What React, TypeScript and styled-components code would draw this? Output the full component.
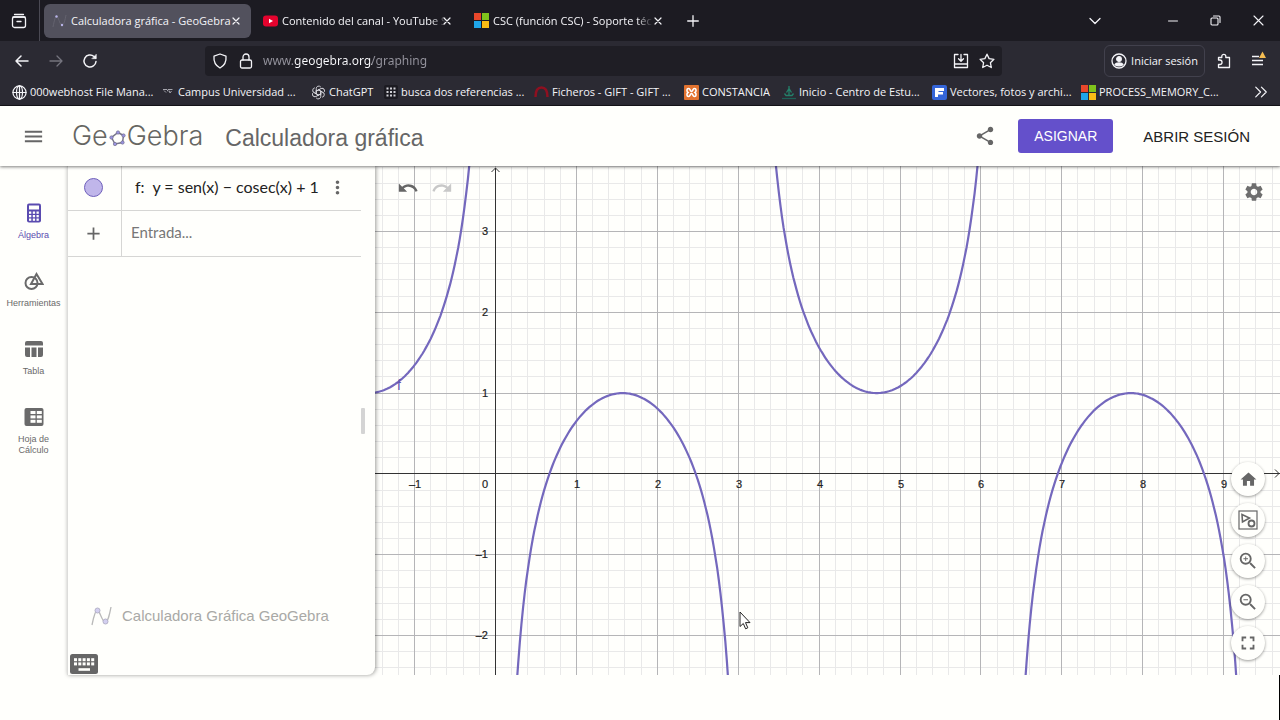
import React, { useLayoutEffect, useRef, useState } from "react";
import styled, { createGlobalStyle, css } from "styled-components";
import {
  MdAdd,
  MdHome,
  MdMenu,
  MdMoreVert,
  MdRedo,
  MdSettings,
  MdShare,
  MdUndo,
  MdZoomIn,
  MdZoomOut,
  MdFullscreen,
} from "react-icons/md";

const chromeFont = `"Open Sans", "Noto Sans", sans-serif`;
const appFont = `"Liberation Sans", Arial, sans-serif`;
const mathFont = `Lato, "Open Sans", sans-serif`;
const paper = "#fffffc";

const GlobalStyle = createGlobalStyle`
  *, *::before, *::after { box-sizing: border-box; }
  body { margin: 0; background: ${paper}; font-family: ${appFont}; }
  button, input { font: inherit; margin: 0; padding: 0; border: 0; background: none; color: inherit; }
  button { cursor: pointer; }
  svg { display: block; flex: none; }
`;

const Page = styled.div`
  display: flex;
  flex-direction: column;
  min-height: 100vh;
`;

/* ---------- browser window ---------- */

const Browser = styled.header`
  background: #2b2a33;
  color: #f4f4f8;
  font-family: ${chromeFont};
  font-size: 11px;
  line-height: 16px;
  border-bottom: 1px solid #15141a;
`;

const TabStrip = styled.div`
  display: flex;
  align-items: center;
  height: 41px;
  background: #1c1b22;
`;

const RecentButton = styled.button`
  display: grid;
  place-items: center;
  width: 40px;
  height: 41px;
  padding-right: 2px;
  border-right: 1px solid #4a4953;
`;

const TabList = styled.div`
  display: flex;
  gap: 4px;
  padding-left: 4px;
`;

const Tab = styled.div<{ $active?: boolean }>`
  display: flex;
  align-items: center;
  width: 207px;
  height: 34px;
  padding: 0 10px 0 8px;
  border-radius: 6px;
  ${(p) =>
    p.$active &&
    css`
      background: #52515d;
    `}
`;

const TabTitle = styled.button`
  display: flex;
  flex: 1;
  align-items: center;
  gap: 4px;
  min-width: 0;
  text-align: left;
`;

const TabText = styled.span<{ $fade?: boolean }>`
  flex: 1;
  white-space: nowrap;
  ${(p) =>
    p.$fade &&
    css`
      mask-image: linear-gradient(to left, transparent 0, #000 16px);
    `}
`;

const IconButton = styled.button<{ $w?: number; $h?: number }>`
  display: grid;
  place-items: center;
  flex: none;
  width: ${(p) => p.$w ?? 34}px;
  height: ${(p) => p.$h ?? 34}px;

  &:disabled {
    color: #75747e;
  }
`;

const Spacer = styled.div<{ $w?: number }>`
  flex: ${(p) => (p.$w ? `0 0 ${p.$w}px` : "1")};
`;

const NavBar = styled.div`
  display: flex;
  align-items: center;
  height: 39px;
  padding: 0 5px;
`;

const NavButtons = styled.div`
  display: flex;
  flex: 0 1 200px;
`;

const UrlBar = styled.label`
  display: flex;
  flex: 1;
  align-items: center;
  height: 30px;
  padding: 0 2px;
  border-radius: 4px;
  background: #1f1e25;
`;

const UrlInput = styled.input`
  flex: 1;
  min-width: 0;
  padding-left: 4px;
  font-family: "Noto Sans", sans-serif;
  font-size: 12px;
  outline: none;
  color: transparent;
  background: linear-gradient(to right, #96959f 34px, #fbfbfe 34px 113px, #96959f 113px);
  background-clip: text;
  -webkit-background-clip: text;
`;

const SignIn = styled.button`
  display: flex;
  align-items: center;
  gap: 4px;
  height: 32px;
  padding: 0 6px;
  border: 1px solid #42414d;
  border-radius: 6px;
  white-space: nowrap;
`;

const Bookmarks = styled.nav`
  display: flex;
  align-items: center;
  height: 25px;
  padding: 0 0 1px 12px;
`;

const Bookmark = styled.a<{ $w: number }>`
  display: flex;
  flex: 0 1 ${(p) => p.$w}px;
  align-items: center;
  gap: 3px;
  color: inherit;
  text-decoration: none;
  white-space: nowrap;
`;

/* ---------- GeoGebra page ---------- */

const AppBar = styled.header`
  position: relative;
  z-index: 2;
  display: flex;
  align-items: center;
  height: 60px;
  padding: 0 30px 0 21px;
  background: ${paper};
  color: #666;
  box-shadow: 0 1px 3px rgba(0, 0, 0, 0.5);
`;

const Brand = styled.a`
  display: flex;
  align-items: center;
  margin-left: 27px;
  color: #666662;
  font-family: Inter, ${appFont};
  font-weight: 300;
  font-size: 27px;
  line-height: 32px;
  text-decoration: none;

  svg {
    margin-top: 4px;
  }
`;

const AppTitle = styled.h1`
  margin: 3px 0 0 22px;
  font-size: 23px;
  font-weight: 400;
  line-height: 32px;
  white-space: nowrap;
`;

const AssignButton = styled.button`
  height: 34px;
  margin: 0 30px 0 16px;
  padding: 0 16px;
  border-radius: 3px;
  background: #6450cb;
  color: #fff;
  font-size: 14px;
`;

const LoginButton = styled.button`
  color: #222;
  font-size: 15px;
  white-space: nowrap;
`;

const Workspace = styled.main`
  display: flex;
  flex: 1;
  min-height: 480px;
`;

const SideNav = styled.nav`
  display: flex;
  flex: none;
  flex-direction: column;
  gap: 30px;
  width: 67px;
  padding-top: 37px;
`;

const SideItem = styled.button<{ $active?: boolean }>`
  display: flex;
  flex-direction: column;
  align-items: center;
  gap: 7px;
  color: ${(p) => (p.$active ? "#5a4bb0" : "#6a6a6a")};
  font-size: 9px;
  line-height: 11px;
`;

const AlgebraPanel = styled.section`
  position: relative;
  z-index: 1;
  display: flex;
  flex: none;
  width: 308px;
  border-left: 1px solid #dcdcda;
  border-bottom-right-radius: 8px;
  background: ${paper};
  box-shadow: 1px 0 4px rgba(0, 0, 0, 0.4);
`;

const AlgebraContent = styled.div`
  display: flex;
  flex: 1;
  flex-direction: column;
`;

const AlgebraRow = styled.div`
  display: flex;
  align-items: stretch;
  height: 46px;
  border-bottom: 1px solid #d6d6d4;

  &:first-child {
    height: 45px;
  }
`;

const RowHead = styled.div`
  display: grid;
  place-items: center;
  width: 54px;
  padding: 0 3px 1px 0;
  border-right: 1px solid #d6d6d4;
  color: #666;
`;

const ColorDot = styled.button`
  width: 19px;
  height: 19px;
  border: 1px solid #6f60bb;
  border-radius: 50%;
  background: #c0b6ea;
`;

const Formula = styled.div`
  display: flex;
  flex: 1;
  align-items: center;
  padding: 0 0 3px 13px;
  color: #222;
  font-family: ${mathFont};
  font-size: 16px;
  white-space: nowrap;
`;

const FormulaInput = styled.input`
  flex: 1;
  min-width: 0;
  padding: 0 0 3px 9px;
  outline: none;
  font-family: ${mathFont};
  font-size: 15px;

  &::placeholder {
    color: #777;
    opacity: 1;
  }
`;

const PanelFooter = styled.div`
  display: flex;
  flex-direction: column;
  gap: 27px;
  margin-top: auto;
  padding: 0 0 1px 2px;
`;

const Watermark = styled.div`
  display: flex;
  align-items: center;
  gap: 10px;
  padding-left: 21px;
  color: #a9a9a6;
  font-size: 15px;
  line-height: 20px;
  white-space: nowrap;
`;

const Splitter = styled.div`
  display: flex;
  align-items: center;
  width: 14px;

  &::after {
    content: "";
    width: 4px;
    height: 26px;
    border-radius: 1px;
    background: #d4d4d4;
  }
`;

const GraphPane = styled.section`
  position: relative;
  flex: 1;
  min-width: 0;
  overflow: hidden;
`;

const Plot = styled.svg`
  position: absolute;
  inset: 0;
  width: 100%;
  height: 100%;
  font-family: ${appFont};
  font-size: 11px;
`;

const History = styled.div`
  position: absolute;
  top: 11px;
  left: 22px;
  display: flex;
  gap: 12px;
  color: #666;
`;

const HistoryButton = styled.button`
  &:disabled {
    color: #c8c8c8;
  }
`;

const SettingsButton = styled.button`
  position: absolute;
  top: 15px;
  right: 15px;
  color: #6e6e6e;
`;

const ZoomTools = styled.div`
  position: absolute;
  right: 15px;
  bottom: 15px;
  display: flex;
  flex-direction: column;
  gap: 7px;
`;

const RoundButton = styled.button`
  display: grid;
  place-items: center;
  width: 34px;
  height: 34px;
  border-radius: 50%;
  background: ${paper};
  color: #666;
  box-shadow: 0 1px 3px rgba(0, 0, 0, 0.4);
`;

const Pointer = styled.svg`
  position: absolute;
  top: 445px;
  left: 364px;
  pointer-events: none;
`;

const BottomStrip = styled.footer`
  height: 45px;
  border-right: 1px solid #000;
  background: ${paper};
`;

/* ---------- icons ---------- */

type LineProps = { size?: number; box?: number; w?: number; children: React.ReactNode };
const Line = ({ size = 16, box = 16, w = 1.3, children }: LineProps) => (
  <svg
    width={size}
    height={size}
    viewBox={`0 0 ${box} ${box}`}
    fill="none"
    stroke="currentColor"
    strokeWidth={w}
    strokeLinecap="round"
    strokeLinejoin="round"
    aria-hidden="true"
  >
    {children}
  </svg>
);

const CloseIcon = () => (
  <Line size={8} box={8} w={1.2}>
    <path d="M1 1l6 6M7 1L1 7" />
  </Line>
);

const Microsoft = () => (
  <svg width="15" height="15" viewBox="0 0 15 15" aria-hidden="true">
    <path fill="#e8472b" d="M0 0h7v7H0z" />
    <path fill="#7fc31c" d="M8 0h7v7H8z" />
    <path fill="#1fa5e8" d="M0 8h7v7H0z" />
    <path fill="#f9bc15" d="M8 8h7v7H8z" />
  </svg>
);

const YouTube = () => (
  <svg width="15" height="14" viewBox="0 0 15 14" aria-hidden="true">
    <rect y="1.5" width="15" height="11" rx="3" fill="#e4032e" />
    <path d="M6 4.7v4.6L10 7z" fill="#fff" />
  </svg>
);

const GraphFavicon = () => (
  <svg width="15" height="16" viewBox="0 0 15 16" aria-hidden="true">
    <path d="M1 14C3 4 4 2 5.500 4S8 12 10 12s3-5 4-10" fill="none" stroke="#64636f" />
    <circle cx="4.500" cy="3.500" r="1.200" fill="#b9b4e8" />
    <circle cx="10" cy="12" r="1.200" fill="#b9b4e8" />
  </svg>
);

const Globe = () => (
  <Line size={15} w={1.3}>
    <circle cx="8" cy="8" r="7" />
    <ellipse cx="8" cy="8" rx="3.200" ry="7" />
    <path d="M1 8h14M8 1v14" />
  </Line>
);

const CampusMark = () => (
  <svg width="13" height="14" viewBox="0 0 13 14" fill="none" stroke="#a5a5ad" aria-hidden="true">
    <path d="M1 4.500h4l1 2M6 4.500h4.500M7 5.500l1 2.500 1.500-2M2 5.500l2 2" />
  </svg>
);

const ChatMark = () => (
  <Line size={15} w={1}>
    {[0, 60, 120, 180, 240, 300].map((a) => (
      <path
        key={a}
        transform={`rotate(${a} 8 8)`}
        d="M5.600 6.600V3.800a2.700 2.700 0 014.600-1.900M5.600 6.600L8 5.200l3.200 1.900"
        stroke="#d8d8de"
      />
    ))}
  </Line>
);

const DotGrid = () => (
  <svg width="14" height="14" viewBox="0 0 14 14" fill="#d0d0d6" aria-hidden="true">
    <rect width="14" height="14" rx="2" fill="#1c1b22" />
    {[2.5, 6, 9.5].map((y) => [2.5, 6, 9.5].map((x) => <rect key={`${x}-${y}`} x={x} y={y} width="2" height="2" />))}
  </svg>
);

const Arch = () => (
  <svg width="15" height="14" viewBox="0 0 15 14" fill="none" stroke="#8e1020" strokeWidth="2.500" aria-hidden="true">
    <path d="M1.500 12C1.500 5 4 2.500 7.500 2.500S13.500 5 13.500 12" />
  </svg>
);

const Xampp = () => (
  <svg width="15" height="15" viewBox="0 0 15 15" aria-hidden="true">
    <rect width="15" height="15" rx="1" fill="#e27330" />
    <path
      d="M4.500 3.500C2.500 3.500 2.500 6.500 4 7.500 2.500 8.500 2.500 11.500 4.500 11.500S6 8.500 7.500 8.500 8.500 11.500 10.500 11.500s2-3 .5-4c1.500-1 1.500-4-.5-4S9 6.500 7.500 6.500 6.500 3.500 4.500 3.500z"
      fill="none"
      stroke="#fff"
      strokeWidth="1.600"
    />
  </svg>
);

const Campus = () => (
  <svg width="14" height="15" viewBox="0 0 14 15" fill="none" stroke="#24806a" strokeWidth="1.300" aria-hidden="true">
    <path d="M7 1v9M7 3.500L4.500 7.500M7 3.500l2.500 4M2.500 8.500L4 10.500h6l1.500-2" />
    <path d="M0 13.500h14" stroke="#1d5f55" />
  </svg>
);

const Freepik = () => (
  <svg width="15" height="15" viewBox="0 0 15 15" aria-hidden="true">
    <rect width="15" height="15" rx="2" fill="#3465d9" />
    <path d="M3 3h9v3H6.500v1H11v2.500H6V12H3z" fill="#fff" />
  </svg>
);

const Pentagon = () => (
  <svg width="19" height="18" viewBox="0 0 19 18" aria-hidden="true">
    <path d="M10 3.500L15.500 6.500 14.500 13.500 7 15 3.500 8.500z" fill="none" stroke="#77758a" strokeWidth="1.500" />
    {[
      [10, 3.5],
      [15.5, 6.5],
      [14.5, 13.5],
      [7, 15],
      [3.5, 8.5],
    ].map(([x, y]) => (
      <circle key={x} cx={x} cy={y} r="1.700" fill="#9a93e0" stroke="#6b6880" strokeWidth="0.600" />
    ))}
  </svg>
);

const Calculator = () => (
  <svg width="14" height="20" viewBox="0 0 14 20" aria-hidden="true">
    <rect y="0.500" width="14" height="19" rx="2" fill="#5a4bb0" />
    <rect x="2" y="2.500" width="10" height="4" fill={paper} />
    {[8.5, 12, 15.5].map((y) => [2, 5.8, 9.5].map((x) => <rect key={`${x}-${y}`} x={x} y={y} width="2.300" height="2.300" fill={paper} />))}
  </svg>
);

const Shapes = () => (
  <svg width="20" height="20" viewBox="0 0 20 20" fill="none" stroke="currentColor" strokeWidth="2" aria-hidden="true">
    <circle cx="7.500" cy="12" r="6" />
    <path d="M12.500 3L7 13h11.500z" />
  </svg>
);

const TableIcon = () => (
  <svg width="20" height="20" viewBox="0 0 20 20" fill="currentColor" aria-hidden="true">
    <path d="M1 4a2 2 0 012-2h14a2 2 0 012 2v2.500H1zM1 8.500h5V18H3a2 2 0 01-2-2zM7.500 8.500h5V18h-5zM14 8.500h5V16a2 2 0 01-2 2h-3z" />
  </svg>
);

const SheetIcon = () => (
  <svg width="20" height="20" viewBox="0 0 20 20" aria-hidden="true">
    <rect x="0.500" y="1" width="19" height="18" rx="2" fill="currentColor" />
    {[4, 8.4, 12.8].map((y) => [6.5, 12.8].map((x) => <rect key={`${x}-${y}`} x={x} y={y} width="5" height="3" fill={paper} />))}
  </svg>
);

const KeyboardIcon = () => (
  <svg width="28" height="20" viewBox="0 0 28 20" aria-hidden="true">
    <rect width="28" height="20" rx="2.500" fill="#666" />
    {[4.2, 8.4].map((y) => [4, 8.3, 12.6, 16.9, 21.2].map((x) => <rect key={`${x}-${y}`} x={x} y={y} width="3" height="3" fill={paper} />))}
    <rect x="8.500" y="14.200" width="11.500" height="2.600" fill={paper} />
  </svg>
);

const CurveMark = () => (
  <svg width="21" height="20" viewBox="0 0 21 20" aria-hidden="true">
    <path d="M1 19C3 9 4.500 4 6.500 4S11 16 14 16 18.500 9 20 1" fill="none" stroke="#b9b9b9" strokeWidth="1.300" />
    <circle cx="6.500" cy="4.500" r="2.500" fill="#d3cff0" stroke="#b5b3c8" />
    <circle cx="14.500" cy="15.500" r="2.500" fill="#d3cff0" stroke="#b5b3c8" />
  </svg>
);

const ShowAllIcon = () => (
  <svg width="20" height="20" viewBox="0 0 20 20" fill="none" stroke="currentColor" aria-hidden="true">
    <rect x="1" y="1" width="18" height="18" strokeWidth="1.200" />
    <path d="M4 4.500L11.500 8 4.500 12z" strokeWidth="1.600" />
    <circle cx="13.500" cy="13.500" r="3" strokeWidth="1.800" />
  </svg>
);

/* ---------- plot ---------- */

const origin = { x: 120.5, y: 307.9 };
const unit = { x: 80.9, y: 80.8 };
const toX = (v: number) => Math.round(origin.x + v * unit.x - 0.5) + 0.5;
const toY = (v: number) => Math.floor(origin.y - v * unit.y) + 0.5;
const range = (from: number, to: number) => Array.from({ length: Math.max(0, to - from + 1) }, (_, i) => from + i);
const label = (n: number) => String(n).replace("-", "–");

const branch = (start: number) => {
  const points: string[] = [];
  for (let t = 0.1; t < Math.PI - 0.1; t += 0.02) {
    const x = start + t;
    const y = Math.sin(x) - 1 / Math.sin(x) + 1;
    points.push(`${(origin.x + x * unit.x).toFixed(1)},${(origin.y - y * unit.y).toFixed(1)}`);
  }
  return points.join(" ");
};

const Graph = () => {
  const ref = useRef<SVGSVGElement>(null);
  const [size, setSize] = useState({ w: 0, h: 0 });

  useLayoutEffect(() => {
    const svg = ref.current;
    if (!svg) return;
    const measure = () => {
      const box = svg.getBoundingClientRect();
      setSize({ w: box.width, h: box.height });
    };
    measure();
    const observer = new ResizeObserver(measure);
    observer.observe(svg);
    return () => observer.disconnect();
  }, []);

  const maxX = (size.w - origin.x) / unit.x;
  const minY = (origin.y - size.h) / unit.y;
  const columns = range(-1, Math.floor(maxX));
  const rows = range(Math.ceil(minY), 3);

  return (
    <Plot ref={ref} role="img" aria-label="Vista gráfica">
      <g stroke="#e9e9e9">
        {range(-7, Math.floor(maxX * 5)).map((i) => (
          <line key={`v${i}`} x1={toX(i / 5)} x2={toX(i / 5)} y1="0" y2="100%" />
        ))}
        {range(Math.ceil(minY * 5), 19).map((i) => (
          <line key={`h${i}`} y1={toY(i / 5)} y2={toY(i / 5)} x1="0" x2="100%" />
        ))}
      </g>
      <g stroke="#b5b5b7">
        {columns.map((i) => (
          <line key={`v${i}`} x1={toX(i)} x2={toX(i)} y1="0" y2="100%" />
        ))}
        {rows.map((i) => (
          <line key={`h${i}`} y1={toY(i)} y2={toY(i)} x1="0" x2="100%" />
        ))}
      </g>
      <g stroke="#333" fill="none">
        <line x1={toX(0)} x2={toX(0)} y1="2" y2="100%" />
        <line x1="0" x2="100%" y1={toY(0)} y2={toY(0)} />
        <path d="M116.500 6l4-4 4 4" />
        <path d={`M${size.w - 5} ${toY(0) - 4}l4 4l-4 4`} />
      </g>
      <g fill="none" stroke="#7468bd" strokeWidth="2.200">
        {range(-1, Math.floor(maxX / Math.PI)).map((n) => (
          <polyline key={n} points={branch(n * Math.PI)} />
        ))}
      </g>
      <g fill="#222" stroke="#222" strokeWidth="0.200" textAnchor="middle">
        {columns.map((n) => (
          <text key={n} x={n === 0 ? 110 : toX(n) + 0.5} y="322">
            {label(n)}
          </text>
        ))}
      </g>
      <g fill="#222" stroke="#222" strokeWidth="0.200" textAnchor="end">
        {rows
          .filter((n) => n !== 0)
          .map((n) => (
            <text key={n} x="113" y={toY(n) + 3.5}>
              {label(n)}
            </text>
          ))}
      </g>
      <text x="22" y="224" fill="#6557b0" fontSize="14">
        f
      </text>
    </Plot>
  );
};

/* ---------- page ---------- */

export default function App() {
  return (
    <Page>
      <GlobalStyle />
      <Browser>
        <TabStrip>
          <RecentButton aria-label="Pestañas recientes">
            <Line size={16}>
              <path d="M3.500 1.500h9M2 4h12" />
              <rect x="1.500" y="4" width="13" height="10.500" rx="2" />
              <path d="M6 8.500h4" />
            </Line>
          </RecentButton>
          <TabList>
            <Tab $active>
              <TabTitle>
                <GraphFavicon />
                <TabText>Calculadora gráfica - GeoGebra</TabText>
              </TabTitle>
              <IconButton $w={10} $h={14} aria-label="Cerrar pestaña">
                <CloseIcon />
              </IconButton>
            </Tab>
            <Tab>
              <TabTitle>
                <YouTube />
                <TabText $fade>Contenido del canal - YouTube S</TabText>
              </TabTitle>
              <IconButton $w={10} $h={14} aria-label="Cerrar pestaña">
                <CloseIcon />
              </IconButton>
            </Tab>
            <Tab>
              <TabTitle>
                <Microsoft />
                <TabText $fade>CSC (función CSC) - Soporte téc</TabText>
              </TabTitle>
              <IconButton $w={10} $h={14} aria-label="Cerrar pestaña">
                <CloseIcon />
              </IconButton>
            </Tab>
          </TabList>
          <IconButton $w={40} aria-label="Nueva pestaña">
            <Line size={12} box={12} w={1.3}>
              <path d="M6 .7v10.600M.7 6h10.600" />
            </Line>
          </IconButton>
          <Spacer />
          <IconButton $w={44} aria-label="Listar pestañas">
            <Line size={12} box={12}>
              <path d="M1 3.500l5 5 5-5" />
            </Line>
          </IconButton>
          <Spacer $w={34} />
          <IconButton $w={43} aria-label="Minimizar">
            <Line size={10} box={10} w={1}>
              <path d="M.5 5h9" />
            </Line>
          </IconButton>
          <IconButton $w={43} aria-label="Restaurar">
            <Line size={11} box={11} w={1.1}>
              <rect x="1" y="3" width="7" height="7" rx="1" />
              <path d="M3.500 1H9a1 1 0 011 1v5.500" />
            </Line>
          </IconButton>
          <IconButton $w={43} aria-label="Cerrar">
            <Line size={11} box={11} w={1.1}>
              <path d="M1 1l9 9M10 1l-9 9" />
            </Line>
          </IconButton>
        </TabStrip>

        <NavBar>
          <NavButtons>
            <IconButton aria-label="Atrás">
              <Line w={1.5}>
                <path d="M14 8H2M7 3L2 8l5 5" />
              </Line>
            </IconButton>
            <IconButton aria-label="Adelante" disabled>
              <Line w={1.3}>
                <path d="M2 8h12M9 3l5 5-5 5" />
              </Line>
            </IconButton>
            <IconButton aria-label="Recargar">
              <Line w={1.5}>
                <path d="M14 8.500A6 6 0 1112 3.500L13.500 5" />
                <path d="M14.300 1.500v4.200h-4.200z" fill="currentColor" strokeWidth="0.500" />
              </Line>
            </IconButton>
          </NavButtons>
          <UrlBar>
            <IconButton as="span" $w={26} $h={30}>
              <Line>
                <path d="M8 1l6 2.200c.5 5-1.500 9.300-6 11.800-4.500-2.500-6.500-6.800-6-11.800z" />
              </Line>
            </IconButton>
            <IconButton as="span" $w={26} $h={30}>
              <Line>
                <rect x="2.500" y="7" width="11" height="8" rx="1.500" />
                <path d="M5 7V4a3 3 0 016 0v3" />
              </Line>
            </IconButton>
            <UrlInput aria-label="Dirección" defaultValue="www.geogebra.org/graphing" />
            <IconButton $w={26} $h={30} aria-label="Instalar">
              <Line>
                <path d="M5 1.500H1.500v9.500h13V1.500H11M1.500 11v3.500h13V11M8 1.500V8M5.500 5.800L8 8.300l2.500-2.500" />
              </Line>
            </IconButton>
            <IconButton $w={26} $h={30} aria-label="Añadir a marcadores">
              <Line>
                <path d="M8 1.200l2.100 4.400 4.800.7-3.500 3.400.9 4.800L8 12.200l-4.300 2.300.9-4.800L1.100 6.300l4.800-.7z" />
              </Line>
            </IconButton>
          </UrlBar>
          <Spacer $w={102} />
          <SignIn>
            <Line>
              <circle cx="8" cy="8" r="7" />
              <circle cx="8" cy="6" r="2.300" fill="currentColor" />
              <path d="M4 11.500c1-2 7-2 8 0-1.500 1.800-6.500 1.800-8 0z" fill="currentColor" />
            </Line>
            Iniciar sesión
          </SignIn>
          <IconButton $w={38} aria-label="Extensiones">
            <Line>
              <path d="M2.500 7V4.500h3.300V3.300a2 2 0 014 0v1.200h3.700v10H2.500V11.500h1.300a2 2 0 000-4.500z" />
            </Line>
          </IconButton>
          <IconButton $w={32} aria-label="Menú">
            <svg width="16" height="20" viewBox="0 0 16 20" aria-hidden="true">
              <path d="M1 5.500h7M1 9.500h11M1 13.500h11" stroke="currentColor" strokeWidth="1.300" />
              <path d="M11.500 .5l3.500 6.500h-7z" fill="#f5bd52" />
            </svg>
          </IconButton>
        </NavBar>

        <Bookmarks aria-label="Marcadores">
          <Bookmark href="#" $w={150}><Globe />000webhost File Mana...</Bookmark>
          <Bookmark href="#" $w={149}><CampusMark />Campus Universidad ...</Bookmark>
          <Bookmark href="#" $w={73}><ChatMark />ChatGPT</Bookmark>
          <Bookmark href="#" $w={150}><DotGrid />busca dos referencias ...</Bookmark>
          <Bookmark href="#" $w={150}><Arch />Ficheros - GIFT - GIFT ...</Bookmark>
          <Bookmark href="#" $w={98}><Xampp />CONSTANCIA</Bookmark>
          <Bookmark href="#" $w={150}><Campus />Inicio - Centro de Estu...</Bookmark>
          <Bookmark href="#" $w={149}><Freepik />Vectores, fotos y archi...</Bookmark>
          <Bookmark href="#" $w={150}><Microsoft />PROCESS_MEMORY_C...</Bookmark>
          <Spacer />
          <IconButton $w={38} $h={24} aria-label="Más marcadores">
            <Line size={14} w={1.4}>
              <path d="M2 2.500L7.500 8 2 13.500M8.500 2.500L14 8l-5.500 5.500" />
            </Line>
          </IconButton>
        </Bookmarks>
      </Browser>

      <AppBar>
        <IconButton $w={24} $h={24} aria-label="Menú principal"><MdMenu size={23} /></IconButton>
        <Brand href="#" aria-label="GeoGebra">
          Ge
          <Pentagon />
          Gebra
        </Brand>
        <AppTitle>Calculadora gráfica</AppTitle>
        <Spacer />
        <IconButton aria-label="Compartir"><MdShare size={22} /></IconButton>
        <AssignButton>ASIGNAR</AssignButton>
        <LoginButton>ABRIR SESIÓN</LoginButton>
      </AppBar>

      <Workspace>
        <SideNav>
          <SideItem $active><Calculator />Álgebra</SideItem>
          <SideItem><Shapes />Herramientas</SideItem>
          <SideItem><TableIcon />Tabla</SideItem>
          <SideItem><SheetIcon /><span>Hoja de<br />Cálculo</span></SideItem>
        </SideNav>
        <AlgebraPanel>
          <AlgebraContent>
            <AlgebraRow>
              <RowHead><ColorDot aria-label="Mostrar u ocultar f" /></RowHead>
              <Formula>f:&nbsp; y = sen(x) − cosec(x) + 1</Formula>
              <IconButton $w={24} $h={42} aria-label="Más opciones"><MdMoreVert size={21} color="#666" /></IconButton>
              <Spacer $w={12} />
            </AlgebraRow>
            <AlgebraRow>
              <RowHead><MdAdd size={21} /></RowHead>
              <FormulaInput aria-label="Entrada" placeholder="Entrada..." />
            </AlgebraRow>
            <PanelFooter>
              <Watermark><CurveMark />Calculadora Gráfica GeoGebra</Watermark>
              <IconButton $w={28} $h={21} aria-label="Teclado"><KeyboardIcon /></IconButton>
            </PanelFooter>
          </AlgebraContent>
          <Splitter />
        </AlgebraPanel>
        <GraphPane>
          <Graph />
          <History>
            <HistoryButton aria-label="Deshacer"><MdUndo size={22} /></HistoryButton>
            <HistoryButton aria-label="Rehacer" disabled><MdRedo size={22} /></HistoryButton>
          </History>
          <SettingsButton aria-label="Configuración"><MdSettings size={22} /></SettingsButton>
          <ZoomTools>
            <RoundButton aria-label="Vista estándar"><MdHome size={19} /></RoundButton>
            <RoundButton aria-label="Mostrar todos los objetos"><ShowAllIcon /></RoundButton>
            <RoundButton aria-label="Acercar"><MdZoomIn size={22} /></RoundButton>
            <RoundButton aria-label="Alejar"><MdZoomOut size={22} /></RoundButton>
            <RoundButton aria-label="Pantalla completa"><MdFullscreen size={22} /></RoundButton>
          </ZoomTools>
          <Pointer width="12" height="19" viewBox="0 0 12 19" aria-hidden="true">
            <path d="M1 1v14.500l3.300-3 2.300 5.300 2.200-1-2.300-5.200H11z" fill="#fff" stroke="#222" />
          </Pointer>
        </GraphPane>
      </Workspace>
      <BottomStrip />
    </Page>
  );
}
